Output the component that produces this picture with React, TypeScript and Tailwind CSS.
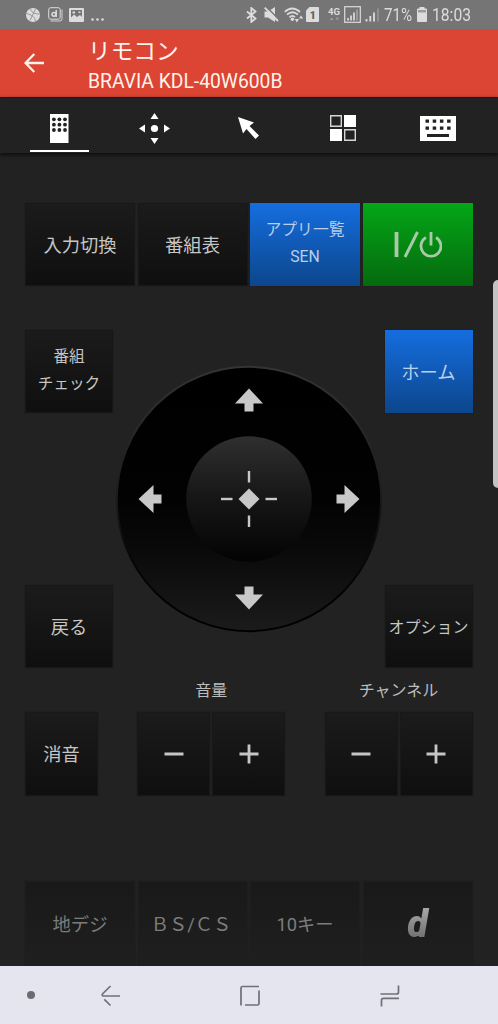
import type { ReactNode } from "react";
import clsx from "clsx";

type KeyTone = "dark" | "blue" | "green" | "faded";

const TONES: Record<KeyTone, string> = {
  dark: "bg-gradient-to-b from-[#1b1b1b] to-[#0f0f0f] border border-[#181818] text-[#c6c6c6]",
  blue: "bg-gradient-to-b from-[#156edf] to-[#0c468d] text-[#b9cfea]",
  green: "bg-gradient-to-b from-[#03a716] to-[#056a0f] text-[#a9c9a9]",
  faded: "bg-gradient-to-b from-[#191919] to-[#1f1f1f] border border-[#1e1e1e] text-[#7c7c7c]",
};

type KeyProps = {
  tone?: KeyTone;
  className?: string;
  label?: string;
  children: ReactNode;
};

function Key({ tone = "dark", className, label, children }: KeyProps) {
  return (
    <button
      type="button"
      aria-label={label}
      className={clsx(
        "flex items-center justify-center whitespace-nowrap text-center text-[18.3px] shadow-[0_0_0_1px_#1f1f1f]",
        !label && "pt-[2px]",
        TONES[tone],
        className
      )}
    >
      {children}
    </button>
  );
}

function StatusBar() {
  return (
    <div className="flex h-[29px] items-center bg-[#757575] pl-[26px] text-[#dcdcdc]">
      {/* Notifications */}
      <svg width="14" height="14" viewBox="0 0 14 14" className="shrink-0">
        <circle cx="7" cy="7" r="7" fill="currentColor" />
        <path d="M4.500 0.500C5 4 8 6 13.500 6M0.500 5.500C6 7 9 9 9.500 13.500M9.500 1L4 12.500" stroke="#858585" fill="none" strokeWidth="0.800" />
      </svg>
      <svg width="15" height="15" viewBox="0 0 15 15" className="ml-[7.500px] shrink-0">
        <rect x="0.700" y="0.700" width="11.500" height="11.500" rx="2" fill="none" stroke="currentColor" />
        <path d="M2.500 14H12Q14 14 14 12V2.500" fill="none" stroke="currentColor" strokeWidth="0.900" />
        <circle cx="5.900" cy="7.300" r="1.900" fill="none" stroke="currentColor" strokeWidth="1.500" />
        <path d="M8.200 3V10" stroke="currentColor" strokeWidth="1.500" />
      </svg>
      <svg width="15" height="14" viewBox="0 0 15 14" className="ml-[6.500px] shrink-0">
        <path fillRule="evenodd" fill="currentColor" d="M1 0H14Q15 0 15 1V13Q15 14 14 14H1Q0 14 0 13V1Q0 0 1 0ZM2 2V9.500L5 6.500L8 9L11 7L13 9V2ZM3.500 3.500H6V5.500H3.500ZM9.500 3.500H11.500V5H9.500Z" />
      </svg>
      <svg width="13" height="3" viewBox="0 0 13 3" className="ml-[7px] mt-[10px] shrink-0" fill="currentColor">
        <circle cx="1.500" cy="1.500" r="1.300" />
        <circle cx="6.500" cy="1.500" r="1.300" />
        <circle cx="11.500" cy="1.500" r="1.300" />
      </svg>

      {/* Radios and battery */}
      <svg width="11" height="16" viewBox="0 0 11 16" className="ml-[142px] shrink-0">
        <path d="M1 4.500L9.500 11.500L5.300 15V1L9.500 4.500L1 11.500" fill="none" stroke="currentColor" strokeWidth="1.800" />
      </svg>
      <svg width="15" height="15" viewBox="0 0 15 15" className="ml-[6.500px] shrink-0">
        <path d="M0.500 4.500H4L11 0V15L4 10.500H0.500Z" fill="currentColor" />
        <path d="M2.500 0L15 12.500" stroke="#757575" strokeWidth="1.500" />
        <path d="M0.700 0.700L14 14" stroke="currentColor" strokeWidth="1.800" />
      </svg>
      <svg width="20" height="16" viewBox="0 0 20 16" className="ml-[5px] shrink-0">
        <g fill="none" stroke="currentColor" strokeWidth="1.700">
          <path d="M0.800 5Q8 -2 16 5" />
          <path d="M3 7.700Q8.300 2.800 14 7.700" />
          <path d="M5.500 10.300Q8.500 7.500 11 10.300" />
        </g>
        <circle cx="8.400" cy="12.300" r="1.700" fill="currentColor" />
        <path d="M10.800 12H15L12.900 15.500ZM15 11.500L17 8.500L19.200 11.500Z" fill="currentColor" />
      </svg>
      <svg width="13" height="15" viewBox="0 0 13 15" className="ml-[2px] shrink-0">
        <path d="M3.500 0H12Q13 0 13 1V14Q13 15 12 15H1Q0 15 0 14V3.500Z" fill="currentColor" />
        <text x="3.700" y="11.500" fontSize="10.500" fontWeight="900" fontFamily="Roboto, sans-serif" fill="#606060">1</text>
      </svg>
      <svg width="13" height="16" viewBox="0 0 13 16" className="ml-[9px] shrink-0">
        <text x="0" y="8" fontSize="9" fontWeight="700" fontFamily="Roboto, sans-serif" fill="currentColor" textLength="12" lengthAdjust="spacingAndGlyphs">4G</text>
        <path d="M2 13L3.700 10.500L5.400 13ZM7.500 10.800H11L9.200 13.300Z" fill="#a0a0a0" />
      </svg>
      <svg width="17" height="17" viewBox="0 0 17 17" className="ml-[3.500px] shrink-0">
        <rect x="0.700" y="0.700" width="15.600" height="15.600" fill="none" stroke="currentColor" strokeWidth="1.200" />
        <path d="M4 12V14.500M7 9.500V14.500M10 6.500V14.500" stroke="currentColor" strokeWidth="1.700" />
        <path d="M13 3.500V14.500" stroke="#a4a4a4" strokeWidth="1.600" />
      </svg>
      <svg width="15" height="15" viewBox="0 0 15 15" className="ml-[3.500px] shrink-0">
        <path d="M1.500 12V14.500M5.300 9V14.500M9 5.500V14.500" stroke="currentColor" strokeWidth="1.800" />
        <path d="M13 1.500V14.500" stroke="#9a9a9a" strokeWidth="1.500" />
      </svg>
      <span className="ml-[4.500px] w-[29px] shrink-0 text-[18px] leading-[29px]">
        <span className="inline-block origin-left scale-x-[0.84]">71%</span>
      </span>
      <svg width="10" height="15" viewBox="0 0 10 15" className="ml-[3.500px] shrink-0">
        <path d="M2.500 0H7.500V1.500H9Q10 1.500 10 2.500V14Q10 15 9 15H1Q0 15 0 14V2.500Q0 1.500 1 1.500H2.500Z" fill="currentColor" />
        <path d="M1 3H9V5.500H1Z" fill="#9c9c9c" />
      </svg>
      <span className="ml-[5.500px] shrink-0 text-[18px] leading-[29px]">
        <span className="inline-block origin-left scale-x-[0.87]">18:03</span>
      </span>
    </div>
  );
}

function Header() {
  return (
    <header className="flex h-[68px] items-center bg-[#dc4433] pl-[24px] text-[#fff3ec]">
      <svg width="20" height="20" viewBox="0 0 20 20" className="shrink-0">
        <path d="M10.300 1L1.500 10L10.300 19M1.500 10H20" fill="none" stroke="currentColor" strokeWidth="2.300" />
      </svg>
      <div className="ml-[44px] pt-[5px]">
        <h1 className="text-[22.700px] leading-[32px]">リモコン</h1>
        <p className="text-[19.300px] leading-[27px]">BRAVIA KDL-40W600B</p>
      </div>
    </header>
  );
}

const TABS: { name: string; icon: ReactNode }[] = [
  {
    name: "remote",
    icon: (
      <svg width="19" height="29" viewBox="0 0 19 29">
        <rect width="18.500" height="29" fill="#fff" />
        <g fill="#222">
          {[5.3, 10.7, 16].map((y) =>
            [3.9, 9.4, 15].map((x) => <circle key={`${x}-${y}`} cx={x} cy={y} r="1.900" />)
          )}
        </g>
      </svg>
    ),
  },
  {
    name: "cursor keys",
    icon: (
      <svg width="31" height="31" viewBox="0 0 31 31" fill="#fff">
        <circle cx="15.500" cy="15.500" r="3.600" />
        <path d="M15.500 0L19.500 6H11.500ZM15.500 31L11.500 25H19.500ZM0 15.500L6 11.500V19.500ZM31 15.500L25 19.500V11.500Z" />
      </svg>
    ),
  },
  {
    name: "pointer",
    icon: (
      <svg width="21" height="22" viewBox="0 0 21 22" fill="#fff">
        <path d="M0 0L16 5.500L11.500 9L21 18.500L17.500 22L8.500 12L5 16.500Z" />
      </svg>
    ),
  },
  {
    name: "apps",
    icon: (
      <svg width="26" height="26" viewBox="0 0 26 26">
        <path d="M14 0H26V12H14ZM0 14H12V26H0Z" fill="#fff" />
        <path d="M0.700 0.700H11.300V11.300H0.700ZM14.700 14.700H25.300V25.300H14.700Z" fill="none" stroke="#d6d6d6" strokeWidth="1.400" />
      </svg>
    ),
  },
  {
    name: "keyboard",
    icon: (
      <svg width="36" height="25" viewBox="0 0 36 25">
        <rect width="36" height="25" fill="#fff" />
        <path d="M5.500 3.500h3.500v3.300h-3.500zM12.700 3.500h3.500v3.300h-3.500zM19.900 3.500h3.500v3.300h-3.500zM27.100 3.500h3.500v3.300h-3.500zM5.500 10.500h3.500v3.300h-3.500zM12.700 10.500h3.500v3.300h-3.500zM19.900 10.500h3.500v3.300h-3.500zM27.100 10.500h3.500v3.300h-3.500zM7 18h22v3H7z" fill="#222" />
      </svg>
    ),
  },
];

function TabBar() {
  return (
    <nav className="grid h-[56px] grid-cols-5 border-t border-[#1a1614] bg-[#222] pr-[12.500px] pl-[12px] shadow-[0_2px_4px_#0c0c0c]">
      {TABS.map((tab, i) => (
        <button
          key={tab.name}
          type="button"
          aria-label={tab.name}
          className={clsx(
            "mx-[18px] mb-px flex items-center justify-center border-b-[2.500px] pt-[9px] pb-px",
            i === 0 ? "border-white" : "border-transparent"
          )}
        >
          {tab.icon}
        </button>
      ))}
    </nav>
  );
}

function DirectionPad() {
  return (
    <svg width="268" height="268" viewBox="-134 -134 268 268" className="-mx-px shrink-0">
      <defs>
        <linearGradient id="ring" x1="0" y1="0" x2="0" y2="1">
          <stop offset="0" stopColor="#000" />
          <stop offset="0.500" stopColor="#020202" />
          <stop offset="0.700" stopColor="#0a0a0a" />
          <stop offset="1" stopColor="#1b1b1b" />
        </linearGradient>
        <linearGradient id="rim" x1="0" y1="0" x2="0" y2="1">
          <stop offset="0" stopColor="#343434" />
          <stop offset="0.500" stopColor="#1b1b1b" />
          <stop offset="0.750" stopColor="#050505" />
          <stop offset="1" stopColor="#000" />
        </linearGradient>
        <linearGradient id="center" x1="0" y1="0" x2="0" y2="1">
          <stop offset="0" stopColor="#2f2f2f" />
          <stop offset="0.500" stopColor="#161616" />
          <stop offset="1" stopColor="#030303" />
        </linearGradient>
      </defs>
      <circle r="132.200" fill="url(#ring)" stroke="url(#rim)" strokeWidth="2" />
      <circle r="62.800" fill="url(#center)" />
      <g fill="#c8c8c8">
        {[0, 90, 180, 270].map((angle) => (
          <g key={angle} transform={`rotate(${angle})`}>
            <path d="M0 -110.500L14 -95.500H4.500V-87.500H-4.500V-95.500H-14Z" />
            <rect x="-1.200" y="-28" width="2.400" height="11.500" />
          </g>
        ))}
        <path d="M0 -10.500L10.500 0L0 10.500L-10.500 0Z" />
      </g>
    </svg>
  );
}

function Minus() {
  return (
    <svg width="20" height="20" viewBox="0 0 20 20">
      <path d="M0.500 10H19.500" stroke="#c6c6c6" strokeWidth="3" />
    </svg>
  );
}

function Plus() {
  return (
    <svg width="20" height="20" viewBox="0 0 20 20">
      <path d="M0.500 10H19.500M10 0.500V19.500" stroke="#c6c6c6" strokeWidth="2.800" />
    </svg>
  );
}

function Rocker({ title }: { title: string }) {
  return (
    <div className="w-[148px]">
      <div className="mb-[11px] text-center text-[16px] leading-[20px] text-[#bdbdbd]">{title}</div>
      <div className="grid grid-cols-2 gap-[2px]">
        <Key className="h-[84px]" label={`${title} -`}><Minus /></Key>
        <Key className="h-[84px]" label={`${title} +`}><Plus /></Key>
      </div>
    </div>
  );
}

function NavBar() {
  return (
    <div className="flex h-[58px] items-center bg-[#e4e5ef] pl-[27px] text-[#707078]">
      <div className="size-[8px] rounded-full bg-[#6c6c70]" />
      <svg width="20" height="22" viewBox="0 0 20 22" className="ml-[66px] mt-[2px]" fill="none" stroke="currentColor" strokeWidth="1.700">
        <path d="M9.500 1L1.500 9Q0.500 10.800 2.500 11H19M3.300 14.300L9.500 20.500" />
      </svg>
      <svg width="20" height="22" viewBox="0 0 20 22" className="ml-[119px] mt-[2px]" fill="none" stroke="currentColor" strokeWidth="1.700">
        <path d="M1 20.500V3Q1 1.500 2.500 1.500H19M19 5.500V18.500Q19 20 17.500 20H5" />
      </svg>
      <svg width="20" height="22" viewBox="0 0 20 22" className="ml-[119.500px] mt-[1px]" fill="none" stroke="currentColor" strokeWidth="1.700">
        <path d="M0.500 9H16.500Q18.500 9 18.500 7V0.500M19 13.300H3.500Q1.500 13.300 1.500 15.300V21.500" />
      </svg>
    </div>
  );
}

export default function App() {
  return (
    <div className="relative flex h-[1024px] w-[498px] flex-col overflow-hidden bg-[#222] font-['Roboto','Noto_Sans_CJK_JP',sans-serif]">
      <StatusBar />
      <Header />
      <TabBar />

      <main className="flex-1 pt-[50px] pr-[25.500px] pl-[25px]">
        <div className="grid h-[83px] grid-cols-4 gap-[2.500px]">
          <Key>入力切換</Key>
          <Key>番組表</Key>
          <Key tone="blue">
            <span className="pb-[5px] text-[15.800px] leading-[27px]">
              アプリ一覧
              <br />
              SEN
            </span>
          </Key>
          <Key tone="green" label="power">
            <svg width="48" height="27" viewBox="0 0 48 27" fill="none" stroke="currentColor">
              <path d="M2.500 1V26" strokeWidth="3.800" />
              <path d="M23.500 1L11 26" strokeWidth="3" />
              <path d="M32 6.500A10 10 0 1 0 42 6.500M37 1V14.500" strokeWidth="2.800" />
            </svg>
          </Key>
        </div>

        {/* Direction pad with its corner keys */}
        <div className="mt-[44px] flex h-[338px] items-center justify-between">
          <div className="flex h-full w-[88px] flex-col justify-between">
            <Key className="h-[83px]">
              <span className="pb-[3px] text-[15.600px] leading-[27px]">
                番組
                <br />
                チェック
              </span>
            </Key>
            <Key className="h-[83px]">戻る</Key>
          </div>
          <DirectionPad />
          <div className="flex h-full w-[88px] flex-col justify-between">
            <Key tone="blue" className="h-[83px]">ホーム</Key>
            <Key className="h-[83px]">
              <span className="text-[16px]">オプション</span>
            </Key>
          </div>
        </div>

        <div className="mt-[13px] flex items-end justify-between">
          <Key className="h-[84px] w-[73px]">消音</Key>
          <Rocker title="音量" />
          <Rocker title="チャンネル" />
        </div>

        <div className="mt-[85px] grid h-[85px] grid-cols-4 gap-[2.500px]">
          <Key tone="faded">地デジ</Key>
          <Key tone="faded" className="pr-[3px]">ＢＳ/ＣＳ</Key>
          <Key tone="faded">10キー</Key>
          <Key tone="faded" label="d">
            <span className="inline-block bg-gradient-to-b from-[#b0b0b0] to-[#666] bg-clip-text px-1 text-[38px] leading-[40px] font-black text-transparent italic">
              d
            </span>
          </Key>
        </div>
      </main>

      <NavBar />

      {/* Edge panel handle */}
      <div className="absolute top-[280px] right-0 h-[208px] w-[5.500px] rounded-l-[5px] bg-[#c3c3c3]" />
    </div>
  );
}
